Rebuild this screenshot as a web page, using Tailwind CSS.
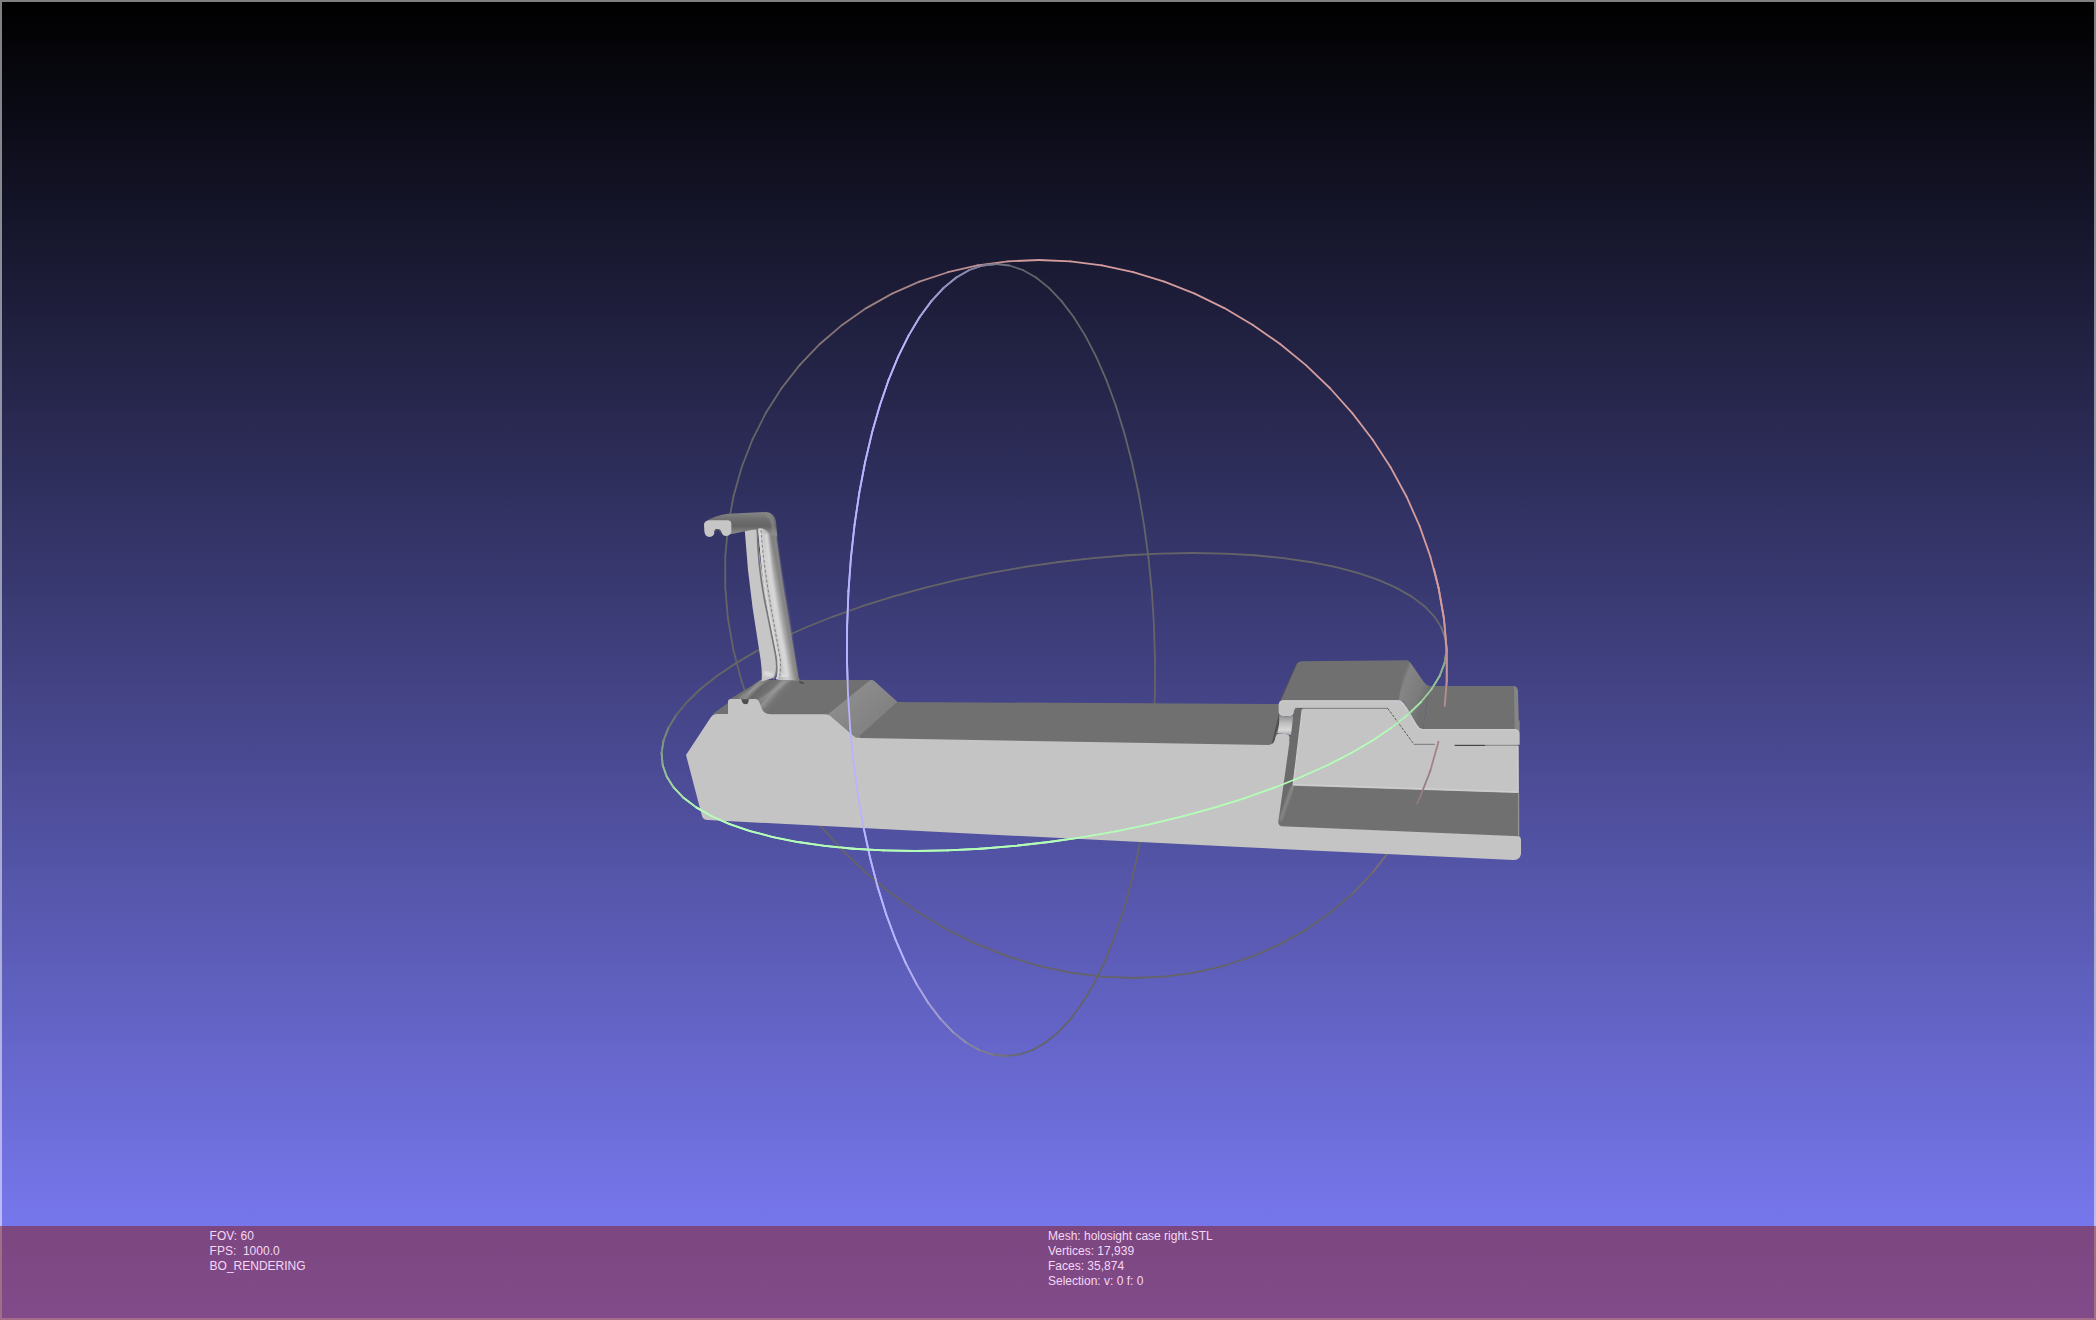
<!DOCTYPE html>
<html lang="en">

<head>
  <meta charset="UTF-8">
  <meta name="viewport" content="width=device-width, initial-scale=1.0">
  <title>holosight case right.STL</title>
  <script src="https://cdn.jsdelivr.net/npm/@tailwindcss/browser@4"></script>
</head>

<body class="relative flex min-h-screen flex-col justify-end overflow-hidden bg-linear-to-b/srgb from-black to-[#8080ff] font-['Liberation_Sans',sans-serif]">
  <svg class="absolute inset-0 h-full w-full" viewBox="0 0 2096 1320" role="img" aria-label="Mesh view">
    <defs>
      <linearGradient id="slope" x1="560" y1="650" x2="640" y2="740" gradientUnits="userSpaceOnUse">
        <stop offset="0" stop-color="#8c8c8c" />
        <stop offset="1" stop-color="#818181" />
      </linearGradient>
      <linearGradient id="arm" x1="0" y1="98" x2="0" y2="160" gradientUnits="userSpaceOnUse">
        <stop offset="0" stop-color="#858585" />
        <stop offset=".3" stop-color="#707070" />
        <stop offset=".65" stop-color="#646464" />
        <stop offset="1" stop-color="#8a8a8a" />
      </linearGradient>
      <linearGradient id="post" x1="318" y1="360" x2="385" y2="348" gradientUnits="userSpaceOnUse">
        <stop offset="0" stop-color="#b9b9b9" />
        <stop offset=".3" stop-color="#d2d2d2" />
        <stop offset=".5" stop-color="#b4b4b4" />
        <stop offset=".75" stop-color="#808080" />
        <stop offset="1" stop-color="#6c6c6c" />
      </linearGradient>
      <linearGradient id="rails" x1="240" y1="630" x2="325" y2="705" gradientUnits="userSpaceOnUse">
        <stop offset="0" stop-color="#707070" />
        <stop offset=".17" stop-color="#707070" />
        <stop offset=".24" stop-color="#8e8e8e" />
        <stop offset=".36" stop-color="#686868" />
        <stop offset=".6" stop-color="#747474" />
        <stop offset=".7" stop-color="#929292" />
        <stop offset=".85" stop-color="#747474" />
        <stop offset="1" stop-color="#707070" />
      </linearGradient>
      <linearGradient id="hoodSlope" x1="480" y1="160" x2="560" y2="190" gradientUnits="userSpaceOnUse">
        <stop offset="0" stop-color="#707070" />
        <stop offset=".15" stop-color="#858585" />
        <stop offset=".75" stop-color="#7b7b7b" />
        <stop offset="1" stop-color="#707070" />
      </linearGradient>
      <linearGradient id="pin" x1="0" y1="255" x2="0" y2="315" gradientUnits="userSpaceOnUse">
        <stop offset="0" stop-color="#8b8b8b" />
        <stop offset=".4" stop-color="#bdbdbd" />
        <stop offset=".75" stop-color="#d8d8d8" />
        <stop offset="1" stop-color="#a5a5a5" />
      </linearGradient>
      <filter id="soft" x="-20%" y="-20%" width="140%" height="140%">
        <feGaussianBlur stdDeviation="3" />
      </filter>
    </defs>

    <g id="back" fill="none" stroke-linecap="round"></g>

    <!-- long body: top face, then side face -->
    <path fill="#707070" d="M856 739 896 702 1282 704 1282 740 1270 747Z" />
    <path fill="#c4c4c4" d="M686 755 711 717Q713 714 716 714H826Q829 714 831 716L853 735Q857 738 861 738L1268 745Q1273 745 1275 739Q1276 734 1280 734H1286Q1290 735 1289 739L1300 780H1500L1519 836Q1521 837 1521 840V854Q1520 860 1513 860L1240 847 920 831 708 820Q703 820 702 816Z" />

    <!-- front block, arm and post -->
    <g transform="translate(660 480) scale(.33333)">
      <path fill="#707070" d="M290 703 425 612 415 600H637L507 703Z" />
      <path fill="url(#slope)" d="M505 702 628 602Q636 597 643 603L712 665 592 774Q588 774 580 767L515 711Z" />
      <path fill="#707070" d="M158 702 300 600H350L400 590 432 608 310 702Z" />
      <path fill="url(#rails)" d="M205 660 304 600H350L418 596 434 610 312 702H205Z" />
      <path stroke="#a0a0a0" stroke-width="4" fill="none" filter="url(#soft)" d="M238 655 325 597M298 662 392 597" />
      <path fill="#4c4c4c" d="M418 602 434 609 428 612 418 608Z" />
      <path fill="#4e4e4e" d="M244 658H264V672H248Z" />
      <path fill="#c4c4c4" d="M204 672V706H330V703Q312 702 306 688L297 664Q293 657 286 657H268L264 670Q256 676 248 669L243 657H213Q205 657 204 664Z" />
      <path fill="url(#post)" d="M292 145 346 130 350 170 368 310 392 455 418 602 385 600 354 600 352 565 325 395Z" />
      <path fill="#c6c6c6" d="M254 148H290L302 250 328 410 350 550Q352 585 340 594L304 604Q308 585 302 540L278 385 264 270Z" />
      <path fill="none" stroke="#777" stroke-width="5" d="M292 148Q293 270 322 400L347 525Q356 580 340 598" />
      <path fill="none" stroke="#d8d8d8" stroke-width="6" d="M299 148Q304 270 329 405L354 530Q360 575 350 598" />
      <path fill="none" stroke="#5a5a5a" stroke-width="2" stroke-dasharray="9 6" d="M303 150Q312 270 340 420L362 545 360 595" />
      <path fill="none" stroke="#d8d8d8" stroke-width="12" filter="url(#soft)" d="M318 160 332 290 352 420 373 530 380 585" />
      <path fill="none" stroke="#dcdcdc" stroke-width="14" filter="url(#soft)" d="M312 578 338 586M362 588 385 588" />
      <path fill="url(#arm)" d="M136 125Q165 105 205 101L318 96Q343 98 348 125L352 170 332 165Q315 140 292 146L212 163Z" />
      <path fill="none" stroke="#8b8b8b" stroke-width="7" filter="url(#soft)" d="M318 103Q336 108 339 135L345 175 360 275 385 425 408 590" />
      <path fill="#c6c6c6" d="M132 132Q136 121 149 121H203Q214 122 214 132V155Q211 168 196 168Q186 166 183 153Q179 146 169 147Q162 149 163 160Q161 169 149 171Q133 169 133 153Z" />
      <path fill="#555" d="M164 158Q162 147 172 147Q183 149 185 162Q176 157 176 150Q167 151 164 158Z" />
    </g>

    <!-- rear hood and cavity -->
    <g transform="translate(1240 630) scale(.33333)">
      <path fill="#c4c4c4" d="M188 230H500L560 330H834L836 490 160 470Z" />
      <path fill="#6b6b6b" d="M163 236H188L158 466 130 587Q115 588 115 575L150 325Z" />
      <path fill="#707070" d="M160 467 836 489 838 619 124 589Q113 586 118 573Z" />
      <path fill="none" stroke="#8f8f8f" stroke-width="7" filter="url(#soft)" d="M157 470 121 572" />
      <path fill="none" stroke="#cecece" stroke-width="4" d="M187 238 160 463 834 486V348" />
      <path fill="none" stroke="#a0a0a0" stroke-width="3" d="M836 490V617" />
      <path fill="#505050" d="M95 343 117 250H128L108 312 103 335Z" />
      <path fill="url(#pin)" d="M117 255Q140 262 160 256L153 315 145 314 112 309Q120 280 117 255Z" />
      <path fill="#c4c4c4" d="M95 346Q103 340 107 322Q109 312 118 311L144 315Q151 317 148 328L140 370 90 360Z" />
      <path fill="#707070" d="M122 213 170 102Q175 94 184 94L498 91Q507 93 511 98L490 214Z" />
      <path fill="none" stroke="#555" stroke-width="3" d="M121 210 169 104" />
      <path fill="url(#hoodSlope)" d="M475 213 498 91Q506 91 512 99L552 157Q559 166 568 168L549 298 530 285 490 214Z" />
      <path fill="#707070" d="M549 298 568 168H822Q832 169 834 181L835 300Z" />
      <path fill="#858585" d="M822 168Q832 170 834 184L836 270 839 272V305L824 298Z" />
      <path fill="#c4c4c4" d="M116 224Q117 211 129 211H474Q486 211 492 220L532 286Q539 297 550 297H825Q839 299 839 312V344L522 343 443 235H176Q163 235 162 243Q162 255 153 258H126Q115 255 116 244Z" />
      <path fill="none" stroke="#cecece" stroke-width="3" d="M120 221Q123 213 131 213H474Q484 213 490 222L530 288Q538 299 550 299H825Q835 301 837 309" />
      <path fill="none" stroke="#555" stroke-width="2" d="M165 235H443M522 343H585" />
      <path fill="none" stroke="#222" stroke-width="2" stroke-dasharray="8 4" d="M443 235 522 343" />
      <path fill="none" stroke="#2c2c2c" stroke-width="3" d="M644 346H735" />
      <path fill="none" stroke="#666" stroke-width="2" d="M735 346H836" />
    </g>

    <g id="front" fill="none" stroke-linecap="round"></g>
  </svg>

  <!-- frame round the viewport -->
  <div class="pointer-events-none absolute inset-0 border-2 border-white/50"></div>

  <footer class="relative grid min-h-[94px] grid-cols-2 bg-[#820c00]/46 pt-[3px] text-xs leading-[15px] text-[#f6d8f6]">
    <div class="pl-[20%]">
      <p>FOV: 60</p>
      <p class="whitespace-pre">FPS:  1000.0</p>
      <p>BO_RENDERING</p>
    </div>
    <div>
      <p>Mesh: holosight case right.STL</p>
      <p>Vertices: 17,939</p>
      <p>Faces: 35,874</p>
      <p>Selection: v: 0 f: 0</p>
    </div>
  </footer>

  <script>
    // trackball rings: centre, half axis u along x, conjugate half axis v,
    // angle of the brightest point, arcs (degrees) that pass before the mesh
    const rings = [
      { c: [1001, 660], u: 154, v: [5, 396], rgb: [184, 180, 255], mid: 182, full: 50, end: 98, over: [[90, 270]] },
      { c: [1054, 702], u: 367, v: [-139, 149], rgb: [180, 255, 184], mid: 72, full: 62, end: 105, over: [[-22, 200]] },
      { c: [1086, 619], u: 358, v: [47, 359], rgb: [212, 156, 156], mid: -46, full: 45, end: 98, over: [[-8, 14], [20, 31]] },
    ];
    const grey = [100, 100, 104];

    function segment(group, ring, a, b) {
      const at = deg => {
        const t = deg * Math.PI / 180;
        return [
          ring.c[0] + ring.u * Math.cos(t) + ring.v[0] * Math.sin(t),
          ring.c[1] + ring.v[1] * Math.sin(t),
        ];
      };
      let away = Math.abs((a + b) / 2 - ring.mid) % 360;
      if (away > 180) away = 360 - away;
      const k = Math.min(1, Math.max(0, (ring.end - away) / (ring.end - ring.full)));
      const [x1, y1] = at(a), [x2, y2] = at(b);
      const line = document.createElementNS("http://www.w3.org/2000/svg", "line");
      Object.entries({ x1, y1, x2, y2 }).forEach(([name, value]) => line.setAttribute(name, value));
      line.setAttribute("stroke", `rgb(${grey.map((g, i) => Math.round(g + (ring.rgb[i] - g) * k))})`);
      line.setAttribute("stroke-width", 1.8);
      group.append(line);
    }

    const back = document.getElementById("back");
    const front = document.getElementById("front");
    const step = 5;
    for (const ring of rings) {
      for (let a = 0; a < 360; a += step) segment(back, ring, a, a + step);
      for (const [from, to] of ring.over) {
        for (let a = from; a < to; a = (Math.floor(a / step) + 1) * step) {
          segment(front, ring, a, Math.min(to, (Math.floor(a / step) + 1) * step));
        }
      }
    }
  </script>
</body>

</html>
